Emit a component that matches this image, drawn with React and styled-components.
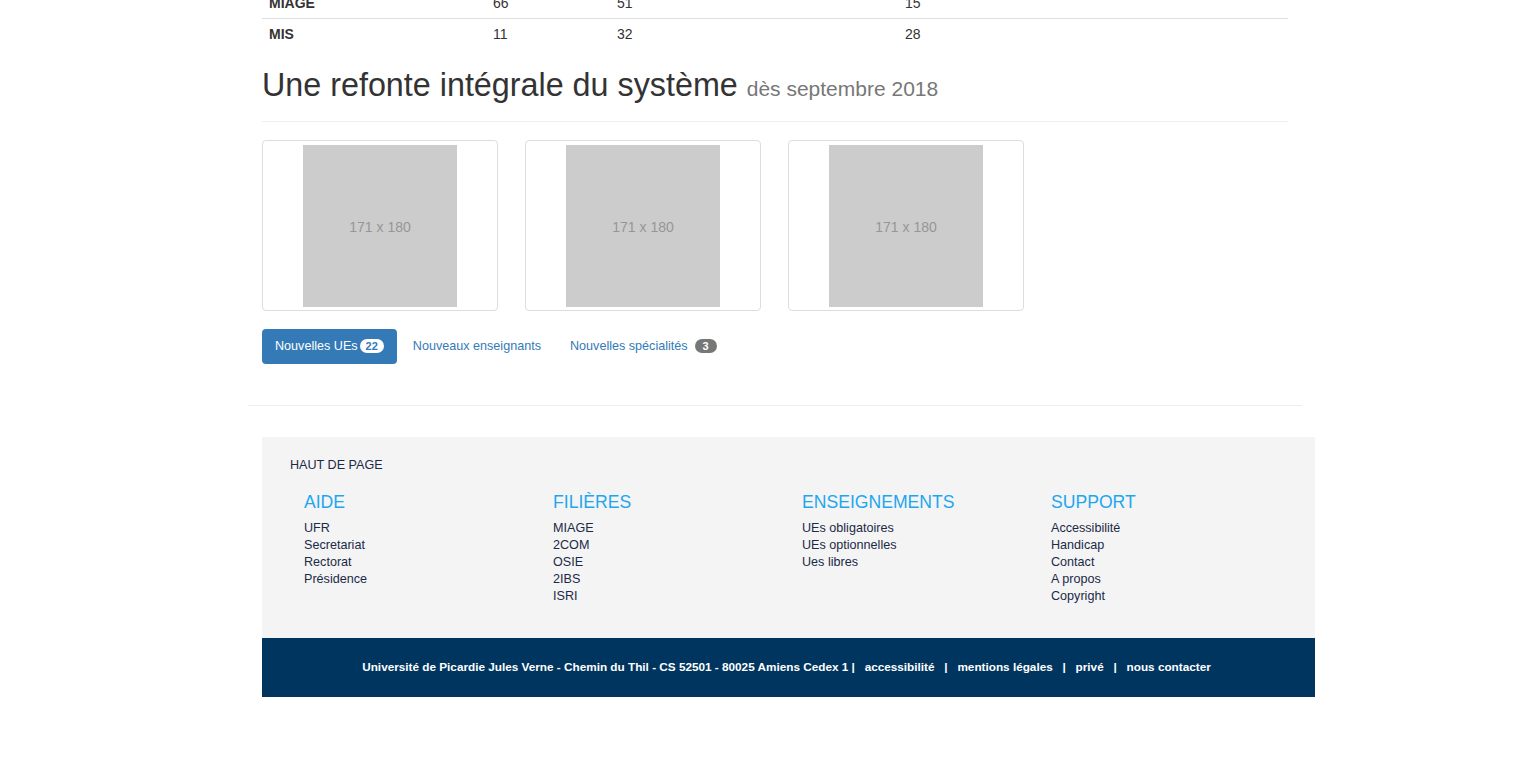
import React from "react";
import styled, { createGlobalStyle } from "styled-components";

const Global = createGlobalStyle`
  html, body { margin: 0; padding: 0; background: #fff; }
  body {
    font-family: "Liberation Sans", Arial, sans-serif;
    font-size: 14px;
    line-height: 1.42857;
    color: #333;
    overflow: hidden;
  }
`;

const Page = styled.div`
  width: 1530px;
  height: 769px;
  overflow: hidden;
`;

const Main = styled.div`
  margin-left: 262px;
  width: 1026px;
`;

const Table = styled.div`
  margin-top: -13px;
`;

const Row = styled.div`
  display: grid;
  grid-template-columns: 224px 124px 288px 1fr;
  border-top: 1px solid #ddd;
`;

const Cell = styled.div`
  padding: 5px 7px;
  line-height: 20px;
  font-weight: ${(p) => (p.$head ? 700 : 400)};
`;

const PageHeader = styled.div`
  margin-top: 19px;
  padding-bottom: 17px;
  border-bottom: 1px solid #eee;
`;

const H1 = styled.h1`
  margin: 0;
  font-size: 32.3px;
  line-height: 1.1;
  font-weight: 400;
  color: #333;
`;

const Small = styled.small`
  font-size: 21px;
  color: #777;
`;

const Thumbs = styled.div`
  display: flex;
  gap: 27px;
  margin-top: 18px;
`;

const Thumb = styled.div`
  box-sizing: border-box;
  width: 236px;
  height: 171px;
  padding: 4px;
  border: 1px solid #ddd;
  border-radius: 4px;
  background: #fff;
  display: flex;
  justify-content: center;
`;

const Placeholder = styled.div`
  box-sizing: border-box;
  width: 154px;
  height: 162px;
  padding-top: 4px;
  background: #ccc;
  color: #969696;
  font-size: 14px;
  display: flex;
  align-items: center;
  justify-content: center;
`;

const Pills = styled.ul`
  list-style: none;
  margin: 18px 0 0;
  padding: 0;
  display: flex;
  gap: 3px;
`;

const Pill = styled.li`
  padding: 8px 13px;
  font-size: 12.6px;
  line-height: 19px;
  border-radius: 4px;
  background: ${(p) => (p.$active ? "#337ab7" : "transparent")};
  color: ${(p) => (p.$active ? "#fff" : "#337ab7")};
  display: flex;
  align-items: center;
`;

const Badge = styled.span`
  display: inline-block;
  margin-left: ${(p) => p.$ml || 2}px;
  min-width: 10px;
  padding: 1px 6px;
  font-size: 11px;
  font-weight: 700;
  line-height: 12px;
  border-radius: 10px;
  text-align: center;
  background: ${(p) => (p.$light ? "#fff" : "#777")};
  color: ${(p) => (p.$light ? "#337ab7" : "#fff")};
`;

const Hr = styled.hr`
  margin: 41px 0 0 248px;
  width: 1054px;
  border: 0;
  border-top: 1px solid #eee;
`;

const Footer = styled.footer`
  margin: 31px 0 0 262px;
  width: 1053px;
`;

const FooterTop = styled.div`
  background: #f4f4f4;
  padding: 20px 28px 33px;
  color: #1b2a47;
  font-size: 12.6px;
`;

const TopLink = styled.div`
  line-height: 17px;
`;

const Columns = styled.div`
  display: grid;
  grid-template-columns: repeat(4, 249px);
  padding-left: 14px;
  margin-top: 17px;
`;

const ColTitle = styled.h3`
  margin: 0 0 7px;
  font-size: 17.6px;
  line-height: 22px;
  font-weight: 400;
  color: #1ea7ef;
  text-transform: uppercase;
`;

const ColLink = styled.div`
  line-height: 17px;
  color: #1b2a47;
`;

const Bottom = styled.div`
  background: #00355f;
  height: 59px;
  display: flex;
  align-items: center;
  justify-content: center;
  padding-right: 4px;
  color: #fff;
  font-size: 11.75px;
  font-weight: 700;
  box-sizing: border-box;
  white-space: pre;
`;

const rows = [
  ["MIAGE", "66", "51", "15"],
  ["MIS", "11", "32", "28"],
];

const cols = [
  { title: "Aide", links: ["UFR", "Secretariat", "Rectorat", "Présidence"] },
  { title: "Filières", links: ["MIAGE", "2COM", "OSIE", "2IBS", "ISRI"] },
  { title: "Enseignements", links: ["UEs obligatoires", "UEs optionnelles", "Ues libres"] },
  { title: "Support", links: ["Accessibilité", "Handicap", "Contact", "A propos", "Copyright"] },
];

export default function App() {
  return (
    <Page>
      <Global />
      <Main>
        <Table>
          {rows.map((r) => (
            <Row key={r[0]}>
              {r.map((c, i) => (
                <Cell key={i} $head={i === 0}>{c}</Cell>
              ))}
            </Row>
          ))}
        </Table>
        <PageHeader>
          <H1>
            Une refonte intégrale du système <Small>dès septembre 2018</Small>
          </H1>
        </PageHeader>
        <Thumbs>
          {[0, 1, 2].map((i) => (
            <Thumb key={i}>
              <Placeholder>171 x 180</Placeholder>
            </Thumb>
          ))}
        </Thumbs>
        <Pills>
          <Pill $active>
            Nouvelles UEs<Badge $light>22</Badge>
          </Pill>
          <Pill>Nouveaux enseignants</Pill>
          <Pill>
            Nouvelles spécialités<Badge $ml={7}>3</Badge>
          </Pill>
        </Pills>
      </Main>
      <Hr />
      <Footer>
        <FooterTop>
          <TopLink>HAUT DE PAGE</TopLink>
          <Columns>
            {cols.map((c) => (
              <div key={c.title}>
                <ColTitle>{c.title}</ColTitle>
                {c.links.map((l) => (
                  <ColLink key={l}>{l}</ColLink>
                ))}
              </div>
            ))}
          </Columns>
        </FooterTop>
        <Bottom>
          {"Université de Picardie Jules Verne - Chemin du Thil - CS 52501 - 80025 Amiens Cedex 1 |   accessibilité   |   mentions légales   |   privé   |   nous contacter"}
        </Bottom>
      </Footer>
    </Page>
  );
}
